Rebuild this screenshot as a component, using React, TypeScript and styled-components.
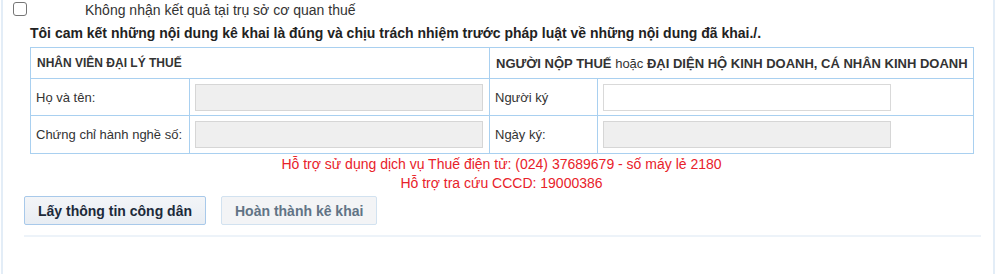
import styled, { createGlobalStyle } from 'styled-components';

const GlobalStyle = createGlobalStyle`
  html, body {
    margin: 0;
    padding: 0;
    background: #fff;
  }
  body {
    font-family: 'Liberation Sans', Arial, sans-serif;
    font-size: 13px;
    color: #333;
  }
`;

const Page = styled.div`
  width: 994px;
  height: 274px;
  box-sizing: border-box;
  border-left: 2px solid #e3edf7;
  border-right: 2px solid #e3edf7;
  margin-left: 1px;
`;

const CheckRow = styled.label`
  display: flex;
  align-items: center;
  height: 20px;
  padding-left: 10px;
  font-size: 14px;
  color: #333;
`;

const CheckBox = styled.span`
  width: 12px;
  height: 12px;
  border: 1px solid #767676;
  border-radius: 3px;
  background: #fff;
  margin-right: 58px;
  margin-top: -2px;
`;

const Pledge = styled.div`
  padding-left: 27px;
  margin-top: 3px;
  font-size: 14px;
  font-weight: bold;
  color: #222;
  line-height: 20px;
`;

const Body = styled.div`
  padding-left: 27px;
  width: 943px;
  margin-top: 4px;
`;

const Table = styled.table`
  width: 943px;
  border-collapse: collapse;
  table-layout: fixed;
`;

const HeadCell = styled.th<{ $size: number }>`
  border: 1px solid #a9d0f0;
  height: 30px;
  padding: 0 6px;
  text-align: left;
  font-size: ${(p) => p.$size}px;
  font-weight: bold;
  color: #333;
  white-space: nowrap;
`;

const Light = styled.span`
  font-weight: normal;
`;

const Cell = styled.td<{ $h: number }>`
  border: 1px solid #a9d0f0;
  height: ${(p) => p.$h}px;
  padding: 0 5px;
  font-size: 13px;
  color: #333;
  box-sizing: border-box;
`;

const Field = styled.div<{ $disabled?: boolean }>`
  width: 288px;
  height: 27px;
  box-sizing: border-box;
  border: 1px solid ${(p) => (p.$disabled ? '#d6d6d6' : '#d9d9d9')};
  background: ${(p) => (p.$disabled ? '#efefef' : '#fff')};
`;

const Notes = styled.div`
  text-align: center;
  color: #e8222a;
  font-size: 14px;
  line-height: 19px;
  margin-top: 1px;
`;

const Actions = styled.div`
  display: flex;
  gap: 15px;
  padding-left: 21px;
  margin-top: 3px;
`;

const Button = styled.button<{ $disabled?: boolean }>`
  height: 29px;
  padding: 0 13px;
  font-family: 'Liberation Sans', Arial, sans-serif;
  font-size: 14px;
  font-weight: bold;
  border-radius: 2px;
  border: 1px solid ${(p) => (p.$disabled ? '#d2e2f0' : '#a8c9ea')};
  background: ${(p) => (p.$disabled ? '#f3f4f6' : 'linear-gradient(#f3f5f8, #e8edf3)')};
  color: ${(p) => (p.$disabled ? '#617385' : '#1c2a3a')};
`;

const Rule = styled.div`
  margin: 10px 12px 0 21px;
  height: 2px;
  background: #edf3f9;
`;

export default function App() {
  return (
    <>
      <GlobalStyle />
      <Page>
        <CheckRow>
          <CheckBox />
          Không nhận kết quả tại trụ sở cơ quan thuế
        </CheckRow>
        <Pledge>
          Tôi cam kết những nội dung kê khai là đúng và chịu trách nhiệm trước pháp luật về những nội dung đã khai./.
        </Pledge>
        <Body>
          <Table>
            <colgroup>
              <col style={{ width: 159 }} />
              <col style={{ width: 300 }} />
              <col style={{ width: 108 }} />
              <col style={{ width: 376 }} />
            </colgroup>
            <thead>
              <tr>
                <HeadCell $size={12} colSpan={2}>NHÂN VIÊN ĐẠI LÝ THUẾ</HeadCell>
                <HeadCell $size={13} colSpan={2}>
                  NGƯỜI NỘP THUẾ <Light>hoặc</Light> ĐẠI DIỆN HỘ KINH DOANH, CÁ NHÂN KINH DOANH
                </HeadCell>
              </tr>
            </thead>
            <tbody>
              <tr>
                <Cell $h={37}>Họ và tên:</Cell>
                <Cell $h={37}><Field $disabled /></Cell>
                <Cell $h={37}>Người ký</Cell>
                <Cell $h={37}><Field /></Cell>
              </tr>
              <tr>
                <Cell $h={38}>Chứng chỉ hành nghề số:</Cell>
                <Cell $h={38}><Field $disabled /></Cell>
                <Cell $h={38}>Ngày ký:</Cell>
                <Cell $h={38}><Field $disabled /></Cell>
              </tr>
            </tbody>
          </Table>
          <Notes>
            <div>Hỗ trợ sử dụng dịch vụ Thuế điện tử: (024) 37689679 - số máy lẻ 2180</div>
            <div>Hỗ trợ tra cứu CCCD: 19000386</div>
          </Notes>
        </Body>
        <Actions>
          <Button>Lấy thông tin công dân</Button>
          <Button $disabled>Hoàn thành kê khai</Button>
        </Actions>
        <Rule />
      </Page>
    </>
  );
}
